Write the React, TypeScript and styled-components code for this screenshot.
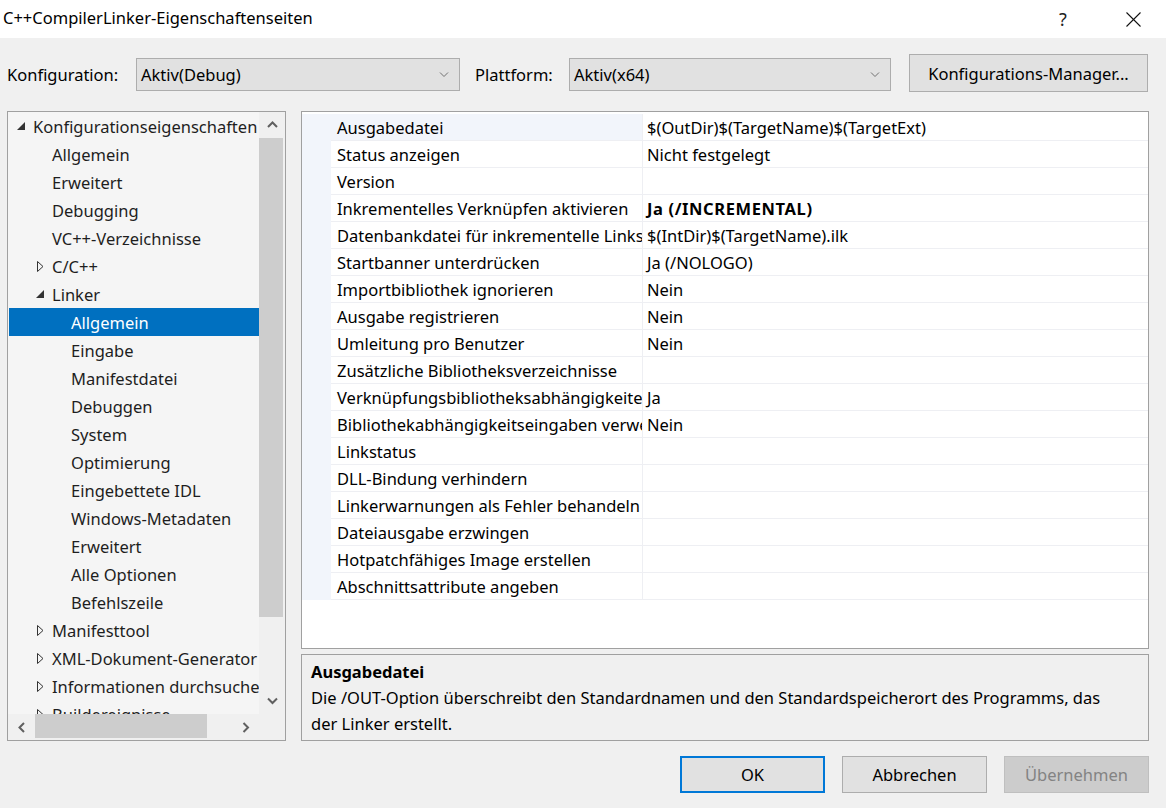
import React from "react";
import styled, { createGlobalStyle, css } from "styled-components";

const GlobalStyle = createGlobalStyle`
  html, body { margin: 0; padding: 0; background: #f0f0f0; }
  body {
    font-family: "Noto Sans", "Open Sans", sans-serif;
    font-size: 16.5px;
    color: #000;
  }
  * { box-sizing: border-box; }
`;

const Window = styled.div`
  width: 1166px;
  height: 808px;
  display: flex;
  flex-direction: column;
  background: #f0f0f0;
  overflow: hidden;
`;

const TitleBar = styled.div`
  height: 38px;
  background: #fff;
  display: flex;
  align-items: center;
  padding-left: 3px;
  font-size: 16.5px;
`;

const TitleText = styled.div`
  flex: 1;
  margin-top: -4px;
`;

const TitleButton = styled.div<{ $mr: number }>`
  width: 46px;
  height: 30px;
  display: flex;
  align-items: center;
  justify-content: center;
  margin-right: ${(p) => p.$mr}px;
  font-size: 18px;
  color: #222;
`;

const Toolbar = styled.div`
  margin-top: 16px;
  height: 38px;
  display: flex;
  align-items: flex-end;
  padding-left: 7px;
`;

const FieldLabel = styled.div<{ $w: number; $ml?: number }>`
  width: ${(p) => p.$w}px;
  margin-left: ${(p) => p.$ml ?? 0}px;
  height: 33px;
  line-height: 33px;
  margin-bottom: 1px;
  white-space: nowrap;
`;

const Combo = styled.div<{ $w: number }>`
  width: ${(p) => p.$w}px;
  height: 33px;
  margin-bottom: 1px;
  background: #e1e1e1;
  border: 1px solid #adadad;
  display: flex;
  align-items: center;
  justify-content: space-between;
  padding: 0 10px 0 4px;
`;

const PushButton = styled.div<{ $w: number; $primary?: boolean; $disabled?: boolean }>`
  width: ${(p) => p.$w}px;
  height: 38px;
  background: #e1e1e1;
  border: 1px solid #adadad;
  display: flex;
  align-items: center;
  justify-content: center;
  white-space: nowrap;
  ${(p) =>
    p.$primary &&
    css`
      border: 2px solid #0078d7;
    `}
  ${(p) =>
    p.$disabled &&
    css`
      background: #cccccc;
      border-color: #bfbfbf;
      color: #838383;
    `}
`;

const ManagerButton = styled(PushButton)`
  margin-left: 18px;
`;

const Main = styled.div`
  margin-top: 19px;
  height: 630px;
  display: flex;
  padding-left: 7px;
`;

const TreePanel = styled.div`
  width: 279px;
  height: 630px;
  border: 1px solid #a0a0a0;
  display: grid;
  grid-template-columns: 251px 26px;
  grid-template-rows: 602px 26px;
  background: #f0f0f0;
`;

const TreeList = styled.div`
  background: #f5f5f5;
  overflow: hidden;
`;

const TreeRow = styled.div<{ $level: number; $selected?: boolean }>`
  height: 28px;
  margin-left: 1px;
  display: flex;
  align-items: center;
  padding-left: ${(p) => 4 + p.$level * 19}px;
  white-space: nowrap;
  color: #1e1e1e;
  ${(p) =>
    p.$selected &&
    css`
      background: #0070c0;
      color: #fff;
    `}
`;

const Expander = styled.span`
  width: 16px;
  height: 28px;
  display: flex;
  align-items: center;
  justify-content: center;
  margin-right: 4px;
  flex-shrink: 0;
`;

const VScroll = styled.div`
  display: flex;
  flex-direction: column;
  background: #f0f0f0;
`;

const HScroll = styled.div`
  display: flex;
  background: #f0f0f0;
`;

const ArrowBox = styled.div<{ $w: number; $h: number }>`
  width: ${(p) => p.$w}px;
  height: ${(p) => p.$h}px;
  display: flex;
  align-items: center;
  justify-content: center;
  flex-shrink: 0;
`;

const VThumb = styled.div`
  width: 24px;
  height: 479px;
  background: #cdcdcd;
`;

const HThumb = styled.div`
  width: 172px;
  height: 24px;
  background: #cdcdcd;
`;

const Track = styled.div`
  flex: 1;
`;

const Corner = styled.div`
  background: #f0f0f0;
`;

const RightColumn = styled.div`
  margin-left: 15px;
  width: 848px;
  display: flex;
  flex-direction: column;
`;

const GridPanel = styled.div`
  height: 538px;
  border: 1px solid #a0a0a0;
  background: #fff;
  overflow: hidden;
  padding-top: 2px;
`;

const PropRow = styled.div`
  display: grid;
  grid-template-columns: 29px 312px 1fr;
  height: 27px;
`;

const MarginCell = styled.div`
  background: #f2f5fb;
`;

const NameCell = styled.div<{ $selected?: boolean }>`
  padding-left: 6px;
  border-bottom: 1px solid #eeeff3;
  border-right: 1px solid #eeeff3;
  overflow: hidden;
  white-space: nowrap;
  line-height: 27px;
  background: ${(p) => (p.$selected ? "#f2f5fb" : "#fff")};
`;

const ValueCell = styled.div<{ $bold?: boolean }>`
  padding-left: 4px;
  border-bottom: 1px solid #eeeff3;
  overflow: hidden;
  white-space: nowrap;
  line-height: 27px;
  ${(p) =>
    p.$bold &&
    css`
      font-weight: 700;
      letter-spacing: 0.6px;
    `}
`;

const DescPanel = styled.div`
  margin-top: 5px;
  height: 87px;
  border: 1px solid #a0a0a0;
  background: #f0f0f0;
  padding: 4px 9px;
  line-height: 26px;
`;

const DescTitle = styled.div`
  font-weight: 700;
`;

const Footer = styled.div`
  margin-top: 15px;
  display: flex;
  justify-content: flex-end;
  gap: 17px;
  padding-right: 17px;
`;

const FooterButton = styled(PushButton)`
  height: 37px;
`;

const ChevronDown = () => (
  <svg width="10" height="6" viewBox="0 0 10 6">
    <polyline points="1,0.5 5,4.5 9,0.5" fill="none" stroke="#707070" strokeWidth="1" />
  </svg>
);

const ScrollArrow = ({ dir }: { dir: "up" | "down" | "left" | "right" }) => {
  const pts = {
    up: "1,6 5.5,1.5 10,6",
    down: "1,1.5 5.5,6 10,1.5",
    left: "6,1 1.5,5.5 6,10",
    right: "1.5,1 6,5.5 1.5,10",
  }[dir];
  const horiz = dir === "up" || dir === "down";
  return (
    <svg width={horiz ? 11 : 8} height={horiz ? 8 : 11} viewBox={horiz ? "0 0 11 8" : "0 0 8 11"}>
      <polyline points={pts} fill="none" stroke="#606060" strokeWidth="2" />
    </svg>
  );
};

const ExpandedIcon = ({ color }: { color: string }) => (
  <svg width="8" height="8" viewBox="0 0 8 8">
    <polygon points="8,0 8,8 0,8" fill={color} />
  </svg>
);

const CollapsedIcon = ({ color }: { color: string }) => (
  <svg width="7" height="11" viewBox="0 0 7 11">
    <polygon points="0.5,0.5 6,5.5 0.5,10.5" fill="none" stroke={color} strokeWidth="1" />
  </svg>
);

type TreeItem = { label: string; level: number; state?: "open" | "closed"; selected?: boolean };

const treeItems: TreeItem[] = [
  { label: "Konfigurationseigenschaften", level: 0, state: "open" },
  { label: "Allgemein", level: 1 },
  { label: "Erweitert", level: 1 },
  { label: "Debugging", level: 1 },
  { label: "VC++-Verzeichnisse", level: 1 },
  { label: "C/C++", level: 1, state: "closed" },
  { label: "Linker", level: 1, state: "open" },
  { label: "Allgemein", level: 2, selected: true },
  { label: "Eingabe", level: 2 },
  { label: "Manifestdatei", level: 2 },
  { label: "Debuggen", level: 2 },
  { label: "System", level: 2 },
  { label: "Optimierung", level: 2 },
  { label: "Eingebettete IDL", level: 2 },
  { label: "Windows-Metadaten", level: 2 },
  { label: "Erweitert", level: 2 },
  { label: "Alle Optionen", level: 2 },
  { label: "Befehlszeile", level: 2 },
  { label: "Manifesttool", level: 1, state: "closed" },
  { label: "XML-Dokument-Generator", level: 1, state: "closed" },
  { label: "Informationen durchsuchen", level: 1, state: "closed" },
  { label: "Buildereignisse", level: 1, state: "closed" },
];

type Prop = { name: string; value?: string; bold?: boolean };

const props: Prop[] = [
  { name: "Ausgabedatei", value: "$(OutDir)$(TargetName)$(TargetExt)" },
  { name: "Status anzeigen", value: "Nicht festgelegt" },
  { name: "Version" },
  { name: "Inkrementelles Verknüpfen aktivieren", value: "Ja (/INCREMENTAL)", bold: true },
  { name: "Datenbankdatei für inkrementelle Linkstatus", value: "$(IntDir)$(TargetName).ilk" },
  { name: "Startbanner unterdrücken", value: "Ja (/NOLOGO)" },
  { name: "Importbibliothek ignorieren", value: "Nein" },
  { name: "Ausgabe registrieren", value: "Nein" },
  { name: "Umleitung pro Benutzer", value: "Nein" },
  { name: "Zusätzliche Bibliotheksverzeichnisse" },
  { name: "Verknüpfungsbibliotheksabhängigkeiten", value: "Ja" },
  { name: "Bibliothekabhängigkeitseingaben verwenden", value: "Nein" },
  { name: "Linkstatus" },
  { name: "DLL-Bindung verhindern" },
  { name: "Linkerwarnungen als Fehler behandeln" },
  { name: "Dateiausgabe erzwingen" },
  { name: "Hotpatchfähiges Image erstellen" },
  { name: "Abschnittsattribute angeben" },
];

export default function App() {
  return (
    <Window>
      <GlobalStyle />
      <TitleBar>
        <TitleText>C++CompilerLinker-Eigenschaftenseiten</TitleText>
        <TitleButton $mr={24}>?</TitleButton>
        <TitleButton $mr={10}>
          <svg width="15" height="15" viewBox="0 0 15 15">
            <line x1="0.5" y1="0.5" x2="14.5" y2="14.5" stroke="#111" strokeWidth="1.1" />
            <line x1="14.5" y1="0.5" x2="0.5" y2="14.5" stroke="#111" strokeWidth="1.1" />
          </svg>
        </TitleButton>
      </TitleBar>

      <Toolbar>
        <FieldLabel $w={129}>Konfiguration:</FieldLabel>
        <Combo $w={324}>
          <span>Aktiv(Debug)</span>
          <ChevronDown />
        </Combo>
        <FieldLabel $w={94} $ml={15}>
          Plattform:
        </FieldLabel>
        <Combo $w={322}>
          <span>Aktiv(x64)</span>
          <ChevronDown />
        </Combo>
        <ManagerButton $w={239}>Konfigurations-Manager...</ManagerButton>
      </Toolbar>

      <Main>
        <TreePanel>
          <TreeList>
            {treeItems.map((it, i) => {
              const c = it.selected ? "#fff" : "#333";
              return (
                <TreeRow key={i} $level={it.level} $selected={it.selected}>
                  <Expander>
                    {it.state === "open" && <ExpandedIcon color={c} />}
                    {it.state === "closed" && <CollapsedIcon color={c} />}
                  </Expander>
                  {it.label}
                </TreeRow>
              );
            })}
          </TreeList>
          <VScroll>
            <ArrowBox $w={26} $h={26}>
              <ScrollArrow dir="up" />
            </ArrowBox>
            <VThumb />
            <Track />
            <ArrowBox $w={26} $h={27}>
              <ScrollArrow dir="down" />
            </ArrowBox>
          </VScroll>
          <HScroll>
            <ArrowBox $w={27} $h={26}>
              <ScrollArrow dir="left" />
            </ArrowBox>
            <HThumb />
            <Track />
            <ArrowBox $w={27} $h={26}>
              <ScrollArrow dir="right" />
            </ArrowBox>
          </HScroll>
          <Corner />
        </TreePanel>

        <RightColumn>
          <GridPanel>
            {props.map((p, i) => (
              <PropRow key={i}>
                <MarginCell />
                <NameCell $selected={i === 0}>{p.name}</NameCell>
                <ValueCell $bold={p.bold}>{p.value ?? ""}</ValueCell>
              </PropRow>
            ))}
          </GridPanel>
          <DescPanel>
            <DescTitle>Ausgabedatei</DescTitle>
            <div>
              Die /OUT-Option überschreibt den Standardnamen und den Standardspeicherort des Programms, das
              <br />
              der Linker erstellt.
            </div>
          </DescPanel>
        </RightColumn>
      </Main>

      <Footer>
        <FooterButton $w={145} $primary>
          OK
        </FooterButton>
        <FooterButton $w={145}>Abbrechen</FooterButton>
        <FooterButton $w={145} $disabled>
          Übernehmen
        </FooterButton>
      </Footer>
    </Window>
  );
}
